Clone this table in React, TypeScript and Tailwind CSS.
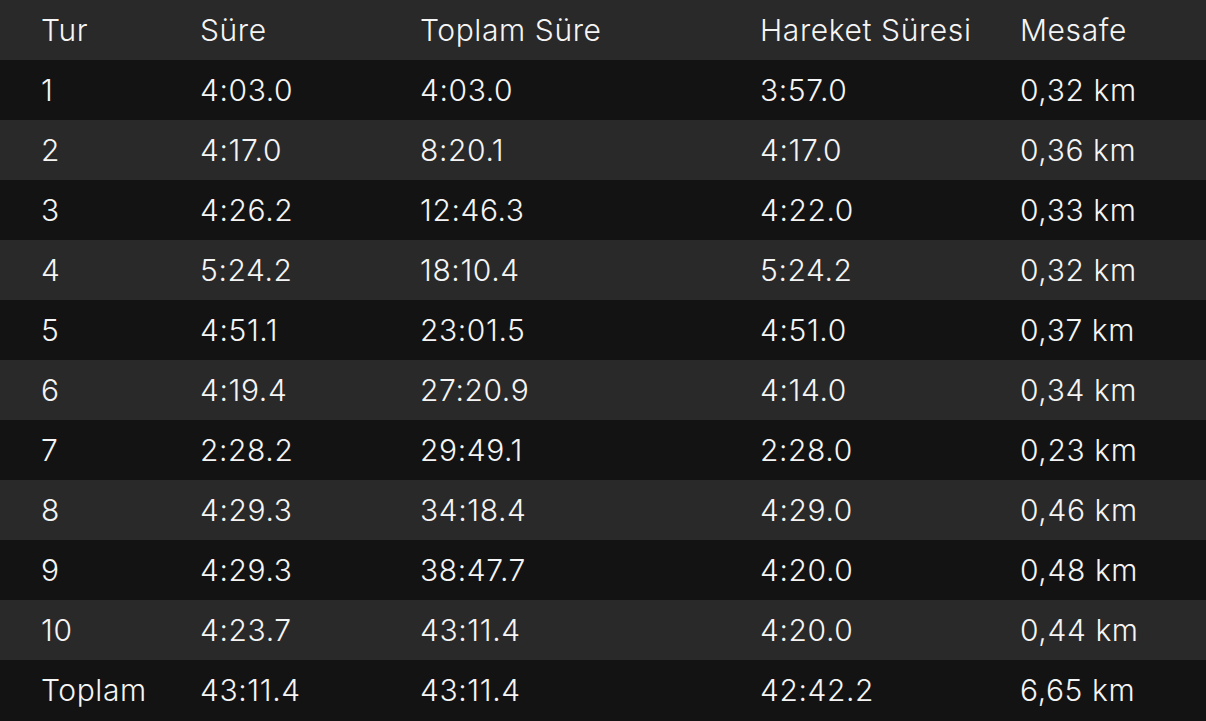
import React from "react";

const header = ["Tur", "Süre", "Toplam Süre", "Hareket Süresi", "Mesafe"];
const rows: string[][] = [
  ["1", "4:03.0", "4:03.0", "3:57.0", "0,32 km"],
  ["2", "4:17.0", "8:20.1", "4:17.0", "0,36 km"],
  ["3", "4:26.2", "12:46.3", "4:22.0", "0,33 km"],
  ["4", "5:24.2", "18:10.4", "5:24.2", "0,32 km"],
  ["5", "4:51.1", "23:01.5", "4:51.0", "0,37 km"],
  ["6", "4:19.4", "27:20.9", "4:14.0", "0,34 km"],
  ["7", "2:28.2", "29:49.1", "2:28.0", "0,23 km"],
  ["8", "4:29.3", "34:18.4", "4:29.0", "0,46 km"],
  ["9", "4:29.3", "38:47.7", "4:20.0", "0,48 km"],
  ["10", "4:23.7", "43:11.4", "4:20.0", "0,44 km"],
  ["Toplam", "43:11.4", "43:11.4", "42:42.2", "6,65 km"],
];

function Row({ cells, dark }: { cells: string[]; dark: boolean }) {
  return (
    <div
      className={`grid h-[60px] items-center pl-[41px] grid-cols-[159px_220px_340px_260px_1fr] ${
        dark ? "bg-[#131313]" : "bg-[#292929]"
      }`}
    >
      {cells.map((c, i) => (
        <div key={i} className="whitespace-nowrap leading-none">
          {c}
        </div>
      ))}
    </div>
  );
}

export default function App() {
  return (
    <div
      className="w-[1206px] h-[721px] bg-[#131313] text-[#f5f5f5] text-[30px] font-[350] tracking-[0.6px] overflow-hidden"
      style={{ fontFamily: "Inter, 'Noto Sans', sans-serif" }}
    >
      <Row cells={header} dark={false} />
      {rows.map((r, i) => (
        <Row key={i} cells={r} dark={i % 2 === 0} />
      ))}
    </div>
  );
}
